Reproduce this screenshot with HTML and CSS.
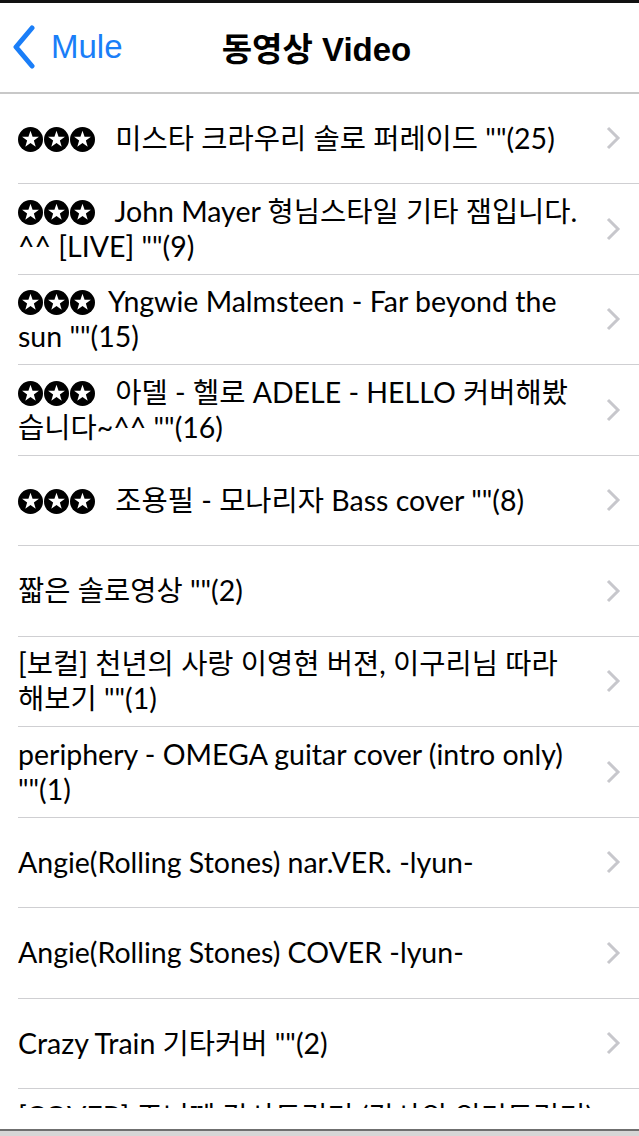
FILE: index.html
```html
<!DOCTYPE html>
<html lang="ko">
<head>
<meta charset="utf-8">
<title>동영상 Video</title>
<link rel="stylesheet" href="styles.css">
</head>
<body>
<div class="screen">
  <header class="nav">
    <a class="back" href="#">
      <svg class="back-icon" viewBox="0 0 24 44" width="24" height="44"><polyline points="20,3 4,22 20,41" fill="none" stroke="#1a7ef8" stroke-width="5" stroke-linecap="round" stroke-linejoin="round"/></svg>
      <span class="back-label">Mule</span>
    </a>
    <h1 class="title">동영상 Video</h1>
    <span class="nav-spacer"></span>
  </header>

  <main class="list">
    <a class="row" href="#">
      <span class="label"><span class="stars"><svg class="star" viewBox="0 0 24 24"><circle cx="12" cy="12" r="12"/><polygon points="12,3.5 14,9.25 20.08,9.37 15.23,13.05 17,18.88 12,15.4 7,18.88 8.77,13.05 3.92,9.37 10,9.25" fill="#fff"/></svg><svg class="star" viewBox="0 0 24 24"><circle cx="12" cy="12" r="12"/><polygon points="12,3.5 14,9.25 20.08,9.37 15.23,13.05 17,18.88 12,15.4 7,18.88 8.77,13.05 3.92,9.37 10,9.25" fill="#fff"/></svg><svg class="star" viewBox="0 0 24 24"><circle cx="12" cy="12" r="12"/><polygon points="12,3.5 14,9.25 20.08,9.37 15.23,13.05 17,18.88 12,15.4 7,18.88 8.77,13.05 3.92,9.37 10,9.25" fill="#fff"/></svg></span> 미스타 크라우리 솔로 퍼레이드 ""(25)</span>
      <svg class="chev" viewBox="0 0 16 24" width="16" height="24"><polyline points="3,2 13,12 3,22" fill="none" stroke="#c7c7cc" stroke-width="3"/></svg>
    </a>
    <a class="row" href="#">
      <span class="label"><span class="stars"><svg class="star" viewBox="0 0 24 24"><circle cx="12" cy="12" r="12"/><polygon points="12,3.5 14,9.25 20.08,9.37 15.23,13.05 17,18.88 12,15.4 7,18.88 8.77,13.05 3.92,9.37 10,9.25" fill="#fff"/></svg><svg class="star" viewBox="0 0 24 24"><circle cx="12" cy="12" r="12"/><polygon points="12,3.5 14,9.25 20.08,9.37 15.23,13.05 17,18.88 12,15.4 7,18.88 8.77,13.05 3.92,9.37 10,9.25" fill="#fff"/></svg><svg class="star" viewBox="0 0 24 24"><circle cx="12" cy="12" r="12"/><polygon points="12,3.5 14,9.25 20.08,9.37 15.23,13.05 17,18.88 12,15.4 7,18.88 8.77,13.05 3.92,9.37 10,9.25" fill="#fff"/></svg></span> John Mayer 형님스타일 기타 잼입니다.<br>^^ [LIVE] ""(9)</span>
      <svg class="chev" viewBox="0 0 16 24" width="16" height="24"><polyline points="3,2 13,12 3,22" fill="none" stroke="#c7c7cc" stroke-width="3"/></svg>
    </a>
    <a class="row" href="#">
      <span class="label"><span class="stars"><svg class="star" viewBox="0 0 24 24"><circle cx="12" cy="12" r="12"/><polygon points="12,3.5 14,9.25 20.08,9.37 15.23,13.05 17,18.88 12,15.4 7,18.88 8.77,13.05 3.92,9.37 10,9.25" fill="#fff"/></svg><svg class="star" viewBox="0 0 24 24"><circle cx="12" cy="12" r="12"/><polygon points="12,3.5 14,9.25 20.08,9.37 15.23,13.05 17,18.88 12,15.4 7,18.88 8.77,13.05 3.92,9.37 10,9.25" fill="#fff"/></svg><svg class="star" viewBox="0 0 24 24"><circle cx="12" cy="12" r="12"/><polygon points="12,3.5 14,9.25 20.08,9.37 15.23,13.05 17,18.88 12,15.4 7,18.88 8.77,13.05 3.92,9.37 10,9.25" fill="#fff"/></svg></span>Yngwie Malmsteen - Far beyond the<br>sun ""(15)</span>
      <svg class="chev" viewBox="0 0 16 24" width="16" height="24"><polyline points="3,2 13,12 3,22" fill="none" stroke="#c7c7cc" stroke-width="3"/></svg>
    </a>
    <a class="row" href="#">
      <span class="label"><span class="stars"><svg class="star" viewBox="0 0 24 24"><circle cx="12" cy="12" r="12"/><polygon points="12,3.5 14,9.25 20.08,9.37 15.23,13.05 17,18.88 12,15.4 7,18.88 8.77,13.05 3.92,9.37 10,9.25" fill="#fff"/></svg><svg class="star" viewBox="0 0 24 24"><circle cx="12" cy="12" r="12"/><polygon points="12,3.5 14,9.25 20.08,9.37 15.23,13.05 17,18.88 12,15.4 7,18.88 8.77,13.05 3.92,9.37 10,9.25" fill="#fff"/></svg><svg class="star" viewBox="0 0 24 24"><circle cx="12" cy="12" r="12"/><polygon points="12,3.5 14,9.25 20.08,9.37 15.23,13.05 17,18.88 12,15.4 7,18.88 8.77,13.05 3.92,9.37 10,9.25" fill="#fff"/></svg></span> 아델 - 헬로 ADELE - HELLO 커버해봤<br>습니다~^^ ""(16)</span>
      <svg class="chev" viewBox="0 0 16 24" width="16" height="24"><polyline points="3,2 13,12 3,22" fill="none" stroke="#c7c7cc" stroke-width="3"/></svg>
    </a>
    <a class="row" href="#">
      <span class="label"><span class="stars"><svg class="star" viewBox="0 0 24 24"><circle cx="12" cy="12" r="12"/><polygon points="12,3.5 14,9.25 20.08,9.37 15.23,13.05 17,18.88 12,15.4 7,18.88 8.77,13.05 3.92,9.37 10,9.25" fill="#fff"/></svg><svg class="star" viewBox="0 0 24 24"><circle cx="12" cy="12" r="12"/><polygon points="12,3.5 14,9.25 20.08,9.37 15.23,13.05 17,18.88 12,15.4 7,18.88 8.77,13.05 3.92,9.37 10,9.25" fill="#fff"/></svg><svg class="star" viewBox="0 0 24 24"><circle cx="12" cy="12" r="12"/><polygon points="12,3.5 14,9.25 20.08,9.37 15.23,13.05 17,18.88 12,15.4 7,18.88 8.77,13.05 3.92,9.37 10,9.25" fill="#fff"/></svg></span> 조용필 - 모나리자 Bass cover ""(8)</span>
      <svg class="chev" viewBox="0 0 16 24" width="16" height="24"><polyline points="3,2 13,12 3,22" fill="none" stroke="#c7c7cc" stroke-width="3"/></svg>
    </a>
    <a class="row" href="#">
      <span class="label">짧은 솔로영상 ""(2)</span>
      <svg class="chev" viewBox="0 0 16 24" width="16" height="24"><polyline points="3,2 13,12 3,22" fill="none" stroke="#c7c7cc" stroke-width="3"/></svg>
    </a>
    <a class="row" href="#">
      <span class="label">[보컬] 천년의 사랑 이영현 버젼, 이구리님 따라<br>해보기 ""(1)</span>
      <svg class="chev" viewBox="0 0 16 24" width="16" height="24"><polyline points="3,2 13,12 3,22" fill="none" stroke="#c7c7cc" stroke-width="3"/></svg>
    </a>
    <a class="row" href="#">
      <span class="label">periphery - OMEGA guitar cover (intro only)<br>""(1)</span>
      <svg class="chev" viewBox="0 0 16 24" width="16" height="24"><polyline points="3,2 13,12 3,22" fill="none" stroke="#c7c7cc" stroke-width="3"/></svg>
    </a>
    <a class="row" href="#">
      <span class="label">Angie(Rolling Stones) nar.VER. -lyun-</span>
      <svg class="chev" viewBox="0 0 16 24" width="16" height="24"><polyline points="3,2 13,12 3,22" fill="none" stroke="#c7c7cc" stroke-width="3"/></svg>
    </a>
    <a class="row" href="#">
      <span class="label">Angie(Rolling Stones) COVER -lyun-</span>
      <svg class="chev" viewBox="0 0 16 24" width="16" height="24"><polyline points="3,2 13,12 3,22" fill="none" stroke="#c7c7cc" stroke-width="3"/></svg>
    </a>
    <a class="row" href="#">
      <span class="label">Crazy Train 기타커버 ""(2)</span>
      <svg class="chev" viewBox="0 0 16 24" width="16" height="24"><polyline points="3,2 13,12 3,22" fill="none" stroke="#c7c7cc" stroke-width="3"/></svg>
    </a>
    <a class="row" href="#">
      <span class="label">[COVER] 조니께 감사드리기 (감사의 의미드리기)<br>""(1)</span>
      <svg class="chev" viewBox="0 0 16 24" width="16" height="24"><polyline points="3,2 13,12 3,22" fill="none" stroke="#c7c7cc" stroke-width="3"/></svg>
    </a>
  </main>
  <div class="gap"></div>
  <footer class="toolbar"></footer>
</div>
</body>
</html>
```

FILE: styles.css
```css
* { box-sizing: border-box; }
html, body { margin: 0; padding: 0; background: #fff; }
body { width: 639px; height: 1136px; overflow: hidden; }

.screen {
  display: flex;
  flex-direction: column;
  height: 1136px;
  border-top: 3px solid #111;
}

.nav {
  flex: none;
  height: 90.5px;
  display: grid;
  grid-template-columns: 1fr auto 1fr;
  align-items: center;
  border-bottom: 2px solid #c8c8c8;
}
.back {
  display: flex;
  align-items: center;
  gap: 15px;
  padding-left: 12px;
  text-decoration: none;
}
.back-icon { display: block; }
.back-label {
  font-family: "Liberation Sans", Arial, sans-serif;
  font-size: 33px;
  color: #1a7ef8;
}
.title {
  margin: 0;
  font-family: "Liberation Sans", "Noto Sans CJK KR", sans-serif;
  font-weight: 700;
  font-size: 33px;
  color: #000;
  position: relative;
  left: -3px;
}

.list {
  flex: none;
  height: 1014px;
  overflow: hidden;
}
.row {
  display: flex;
  align-items: center;
  height: 90.5px;
  margin-left: 18px;
  padding-right: 18px;
  border-bottom: 1px solid #cfcfd2;
  text-decoration: none;
  color: #000;
}
.label {
  flex: 1;
  padding-right: 18px;
  font-family: "Lato", "Noto Sans CJK KR", sans-serif;
  font-size: 28.5px;
  line-height: 35px;
  color: #000;
  white-space: nowrap;
  overflow: hidden;
}
.stars {
  display: inline-flex;
  gap: 1px;
  margin-right: 13px;
  vertical-align: -3px;
}
.star { width: 25px; height: 25px; display: block; }
.chev { flex: none; display: block; }

.gap { flex: none; height: 21px; }
.toolbar {
  flex: 1;
  border-top: 2px solid #6f6f6f;
  background: #d6d6d6;
}
```
